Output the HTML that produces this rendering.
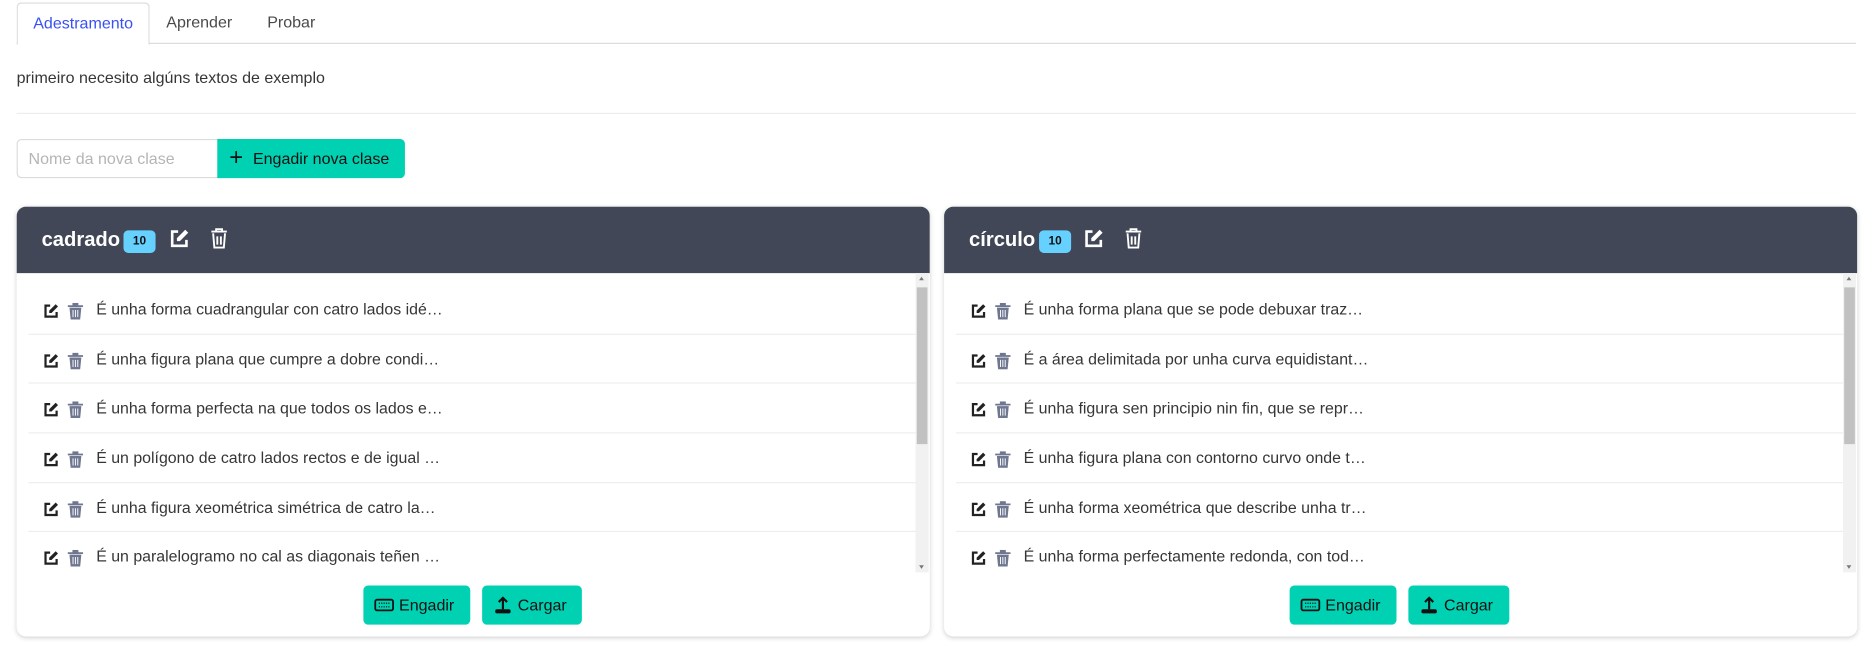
<!DOCTYPE html>
<html><head><meta charset="utf-8"><style>
*{box-sizing:border-box;margin:0;padding:0}
body{width:1862px;height:647px;background:#fff;font-family:"Liberation Sans",sans-serif;color:#363636;overflow:hidden;font-size:14px}
#w{position:absolute;left:0;top:0;width:1568px;height:545px;transform:scale(1.1875);transform-origin:0 0}
.tabs{position:absolute;left:14px;top:0;right:5px;height:37px;border-bottom:1px solid #dbdbdb}
.tab{position:absolute;top:2px;height:35px;line-height:34px;font-size:13.5px;color:#4a4a4a}
.tab.a{left:0;width:112px;border:1px solid #dbdbdb;border-bottom:1px solid #fff;border-radius:4px 4px 0 0;color:#3850f5;text-align:center;height:36px;background:#fff}
.p{position:absolute;left:14px;top:58px;font-size:13.5px;color:#363636}
.hr{position:absolute;left:14px;right:5px;top:95px;height:1px;background:#ededed}
.inp{position:absolute;left:14px;top:117px;width:170px;height:33px;border:1px solid #dbdbdb;border-radius:4px 0 0 4px;color:#b5b5b5;padding:8px 9px;font-size:13.5px}
.addc{position:absolute;left:183px;top:117px;width:158px;height:33px;background:#00d1b2;border-radius:0 4px 4px 0;color:#111;font-size:13.5px;line-height:33px;padding-left:30px}
.addc b{position:absolute;left:10px;top:0;font-size:20px;font-weight:400}
.card{position:absolute;top:174px;width:769px;height:362px;border-radius:8px;box-shadow:0 1px 4px rgba(0,0,0,.18);background:#fff;overflow:hidden}
.hd{height:56px;background:#414756;color:#fff;position:relative}
.hd .t{position:absolute;left:21px;top:18px;font-size:17px;font-weight:bold}
.badge{position:absolute;top:20px;width:27px;height:19px;background:#66d1ff;border-radius:4px;color:#111;font-size:10px;font-weight:bold;text-align:center;line-height:19px}
.hd svg{position:absolute;top:18px}
.list{position:absolute;left:10px;right:12px;top:56px;height:252px;overflow:hidden;padding-top:10px}
.row{height:41.7px;border-bottom:1px solid #ededed;position:relative}
.row span{position:absolute;left:57px;top:13px;font-size:13.4px;color:#363636}
.row svg{position:absolute;top:15px}
.sb{position:absolute;right:1px;top:56px;width:11px;height:252px;background:#f1f1f1}
.sb i{position:absolute;left:1px;top:12px;width:9px;height:132px;background:#c1c1c1}
.sb:before{content:"";position:absolute;left:3px;top:3px;border:2.5px solid transparent;border-bottom:3px solid #777;border-top:0}
.sb:after{content:"";position:absolute;left:3px;bottom:3px;border:2.5px solid transparent;border-top:3px solid #777;border-bottom:0}
.btn{position:absolute;top:319px;height:33px;background:#00d1b2;border-radius:4px;color:#111;font-size:13.5px;line-height:33px}
</style></head><body><div id="w">
<div class="tabs"><div class="tab a">Adestramento</div><div class="tab" style="left:126px">Aprender</div><div class="tab" style="left:211px">Probar</div></div>
<div class="p">primeiro necesito algúns textos de exemplo</div>
<div class="hr"></div>
<div class="inp">Nome da nova clase</div>
<div class="addc"><b>+</b>Engadir nova clase</div>

<div class="card" style="left:14px">
<div class="hd"><span class="t">cadrado</span><span class="badge" style="left:90px">10</span>
<svg style="left:128px" width="18" height="18" viewBox="0 0 18 18"><path d="M8 3H3v12h12v-5" fill="none" stroke="#fff" stroke-width="2.2"/><path d="M14 1.5l2.5 2.5-7 7H7V8.5z" fill="#fff"/></svg>
<svg style="left:163px" width="15" height="18" viewBox="0 0 15 18"><path d="M1 3h13M5 3V1h5v2M2.5 4.5l1 12h8l1-12M6 7v7M9 7v7" fill="none" stroke="#fff" stroke-width="1.6"/></svg></div>
<div class="list">
<div class="row"><svg style="left:12px" width="14" height="14" viewBox="0 0 18 18"><path d="M8 3H3v12h12v-5" fill="none" stroke="#222" stroke-width="2.4"/><path d="M14 1.5l2.5 2.5-7 7H7V8.5z" fill="#222"/></svg><svg style="left:33px" width="13" height="14" viewBox="0 0 13 14"><path d="M0 2h13v1.5H0zM4 0h5v2H4zM1.5 4h10l-1 10h-8z" fill="#6f7690"/><path d="M4.5 6v6M6.5 6v6M8.5 6v6" stroke="#fff" stroke-width=".8"/></svg><span>É unha forma cuadrangular con catro lados idé…</span></div>
<div class="row"><svg style="left:12px" width="14" height="14" viewBox="0 0 18 18"><path d="M8 3H3v12h12v-5" fill="none" stroke="#222" stroke-width="2.4"/><path d="M14 1.5l2.5 2.5-7 7H7V8.5z" fill="#222"/></svg><svg style="left:33px" width="13" height="14" viewBox="0 0 13 14"><path d="M0 2h13v1.5H0zM4 0h5v2H4zM1.5 4h10l-1 10h-8z" fill="#6f7690"/><path d="M4.5 6v6M6.5 6v6M8.5 6v6" stroke="#fff" stroke-width=".8"/></svg><span>É unha figura plana que cumpre a dobre condi…</span></div>
<div class="row"><svg style="left:12px" width="14" height="14" viewBox="0 0 18 18"><path d="M8 3H3v12h12v-5" fill="none" stroke="#222" stroke-width="2.4"/><path d="M14 1.5l2.5 2.5-7 7H7V8.5z" fill="#222"/></svg><svg style="left:33px" width="13" height="14" viewBox="0 0 13 14"><path d="M0 2h13v1.5H0zM4 0h5v2H4zM1.5 4h10l-1 10h-8z" fill="#6f7690"/><path d="M4.5 6v6M6.5 6v6M8.5 6v6" stroke="#fff" stroke-width=".8"/></svg><span>É unha forma perfecta na que todos os lados e…</span></div>
<div class="row"><svg style="left:12px" width="14" height="14" viewBox="0 0 18 18"><path d="M8 3H3v12h12v-5" fill="none" stroke="#222" stroke-width="2.4"/><path d="M14 1.5l2.5 2.5-7 7H7V8.5z" fill="#222"/></svg><svg style="left:33px" width="13" height="14" viewBox="0 0 13 14"><path d="M0 2h13v1.5H0zM4 0h5v2H4zM1.5 4h10l-1 10h-8z" fill="#6f7690"/><path d="M4.5 6v6M6.5 6v6M8.5 6v6" stroke="#fff" stroke-width=".8"/></svg><span>É un polígono de catro lados rectos e de igual …</span></div>
<div class="row"><svg style="left:12px" width="14" height="14" viewBox="0 0 18 18"><path d="M8 3H3v12h12v-5" fill="none" stroke="#222" stroke-width="2.4"/><path d="M14 1.5l2.5 2.5-7 7H7V8.5z" fill="#222"/></svg><svg style="left:33px" width="13" height="14" viewBox="0 0 13 14"><path d="M0 2h13v1.5H0zM4 0h5v2H4zM1.5 4h10l-1 10h-8z" fill="#6f7690"/><path d="M4.5 6v6M6.5 6v6M8.5 6v6" stroke="#fff" stroke-width=".8"/></svg><span>É unha figura xeométrica simétrica de catro la…</span></div>
<div class="row" style="border:0"><svg style="left:12px" width="14" height="14" viewBox="0 0 18 18"><path d="M8 3H3v12h12v-5" fill="none" stroke="#222" stroke-width="2.4"/><path d="M14 1.5l2.5 2.5-7 7H7V8.5z" fill="#222"/></svg><svg style="left:33px" width="13" height="14" viewBox="0 0 13 14"><path d="M0 2h13v1.5H0zM4 0h5v2H4zM1.5 4h10l-1 10h-8z" fill="#6f7690"/><path d="M4.5 6v6M6.5 6v6M8.5 6v6" stroke="#fff" stroke-width=".8"/></svg><span>É un paralelogramo no cal as diagonais teñen …</span></div>
</div>
<div class="sb"><i></i></div>
<div class="btn" style="left:292px;width:90px;padding-left:30px"><svg style="position:absolute;left:9px;top:11px" width="17" height="11" viewBox="0 0 17 11"><rect x="1" y="1" width="15" height="9" rx="1.5" fill="none" stroke="#111" stroke-width="1.5"/><path d="M4 4h9M4 7h9" stroke="#111" stroke-dasharray="1 1"/></svg>Engadir</div>
<div class="btn" style="left:392px;width:84px;padding-left:30px"><svg style="position:absolute;left:10px;top:9px" width="15" height="15" viewBox="0 0 15 15"><path d="M7.5 11V2M4 5l3.5-3.5L11 5" fill="none" stroke="#111" stroke-width="1.8"/><rect x="1" y="11" width="13" height="3.5" rx="1.5" fill="#111"/></svg>Cargar</div>
</div>

<div class="card" style="left:795px">
<div class="hd"><span class="t">círculo</span><span class="badge" style="left:80px">10</span>
<svg style="left:117px" width="18" height="18" viewBox="0 0 18 18"><path d="M8 3H3v12h12v-5" fill="none" stroke="#fff" stroke-width="2.2"/><path d="M14 1.5l2.5 2.5-7 7H7V8.5z" fill="#fff"/></svg>
<svg style="left:152px" width="15" height="18" viewBox="0 0 15 18"><path d="M1 3h13M5 3V1h5v2M2.5 4.5l1 12h8l1-12M6 7v7M9 7v7" fill="none" stroke="#fff" stroke-width="1.6"/></svg></div>
<div class="list">
<div class="row"><svg style="left:12px" width="14" height="14" viewBox="0 0 18 18"><path d="M8 3H3v12h12v-5" fill="none" stroke="#222" stroke-width="2.4"/><path d="M14 1.5l2.5 2.5-7 7H7V8.5z" fill="#222"/></svg><svg style="left:33px" width="13" height="14" viewBox="0 0 13 14"><path d="M0 2h13v1.5H0zM4 0h5v2H4zM1.5 4h10l-1 10h-8z" fill="#6f7690"/><path d="M4.5 6v6M6.5 6v6M8.5 6v6" stroke="#fff" stroke-width=".8"/></svg><span>É unha forma plana que se pode debuxar traz…</span></div>
<div class="row"><svg style="left:12px" width="14" height="14" viewBox="0 0 18 18"><path d="M8 3H3v12h12v-5" fill="none" stroke="#222" stroke-width="2.4"/><path d="M14 1.5l2.5 2.5-7 7H7V8.5z" fill="#222"/></svg><svg style="left:33px" width="13" height="14" viewBox="0 0 13 14"><path d="M0 2h13v1.5H0zM4 0h5v2H4zM1.5 4h10l-1 10h-8z" fill="#6f7690"/><path d="M4.5 6v6M6.5 6v6M8.5 6v6" stroke="#fff" stroke-width=".8"/></svg><span>É a área delimitada por unha curva equidistant…</span></div>
<div class="row"><svg style="left:12px" width="14" height="14" viewBox="0 0 18 18"><path d="M8 3H3v12h12v-5" fill="none" stroke="#222" stroke-width="2.4"/><path d="M14 1.5l2.5 2.5-7 7H7V8.5z" fill="#222"/></svg><svg style="left:33px" width="13" height="14" viewBox="0 0 13 14"><path d="M0 2h13v1.5H0zM4 0h5v2H4zM1.5 4h10l-1 10h-8z" fill="#6f7690"/><path d="M4.5 6v6M6.5 6v6M8.5 6v6" stroke="#fff" stroke-width=".8"/></svg><span>É unha figura sen principio nin fin, que se repr…</span></div>
<div class="row"><svg style="left:12px" width="14" height="14" viewBox="0 0 18 18"><path d="M8 3H3v12h12v-5" fill="none" stroke="#222" stroke-width="2.4"/><path d="M14 1.5l2.5 2.5-7 7H7V8.5z" fill="#222"/></svg><svg style="left:33px" width="13" height="14" viewBox="0 0 13 14"><path d="M0 2h13v1.5H0zM4 0h5v2H4zM1.5 4h10l-1 10h-8z" fill="#6f7690"/><path d="M4.5 6v6M6.5 6v6M8.5 6v6" stroke="#fff" stroke-width=".8"/></svg><span>É unha figura plana con contorno curvo onde t…</span></div>
<div class="row"><svg style="left:12px" width="14" height="14" viewBox="0 0 18 18"><path d="M8 3H3v12h12v-5" fill="none" stroke="#222" stroke-width="2.4"/><path d="M14 1.5l2.5 2.5-7 7H7V8.5z" fill="#222"/></svg><svg style="left:33px" width="13" height="14" viewBox="0 0 13 14"><path d="M0 2h13v1.5H0zM4 0h5v2H4zM1.5 4h10l-1 10h-8z" fill="#6f7690"/><path d="M4.5 6v6M6.5 6v6M8.5 6v6" stroke="#fff" stroke-width=".8"/></svg><span>É unha forma xeométrica que describe unha tr…</span></div>
<div class="row" style="border:0"><svg style="left:12px" width="14" height="14" viewBox="0 0 18 18"><path d="M8 3H3v12h12v-5" fill="none" stroke="#222" stroke-width="2.4"/><path d="M14 1.5l2.5 2.5-7 7H7V8.5z" fill="#222"/></svg><svg style="left:33px" width="13" height="14" viewBox="0 0 13 14"><path d="M0 2h13v1.5H0zM4 0h5v2H4zM1.5 4h10l-1 10h-8z" fill="#6f7690"/><path d="M4.5 6v6M6.5 6v6M8.5 6v6" stroke="#fff" stroke-width=".8"/></svg><span>É unha forma perfectamente redonda, con tod…</span></div>
</div>
<div class="sb"><i></i></div>
<div class="btn" style="left:291px;width:90px;padding-left:30px"><svg style="position:absolute;left:9px;top:11px" width="17" height="11" viewBox="0 0 17 11"><rect x="1" y="1" width="15" height="9" rx="1.5" fill="none" stroke="#111" stroke-width="1.5"/><path d="M4 4h9M4 7h9" stroke="#111" stroke-dasharray="1 1"/></svg>Engadir</div>
<div class="btn" style="left:391px;width:85px;padding-left:30px"><svg style="position:absolute;left:10px;top:9px" width="15" height="15" viewBox="0 0 15 15"><path d="M7.5 11V2M4 5l3.5-3.5L11 5" fill="none" stroke="#111" stroke-width="1.8"/><rect x="1" y="11" width="13" height="3.5" rx="1.5" fill="#111"/></svg>Cargar</div>
</div>
</div></body></html>
